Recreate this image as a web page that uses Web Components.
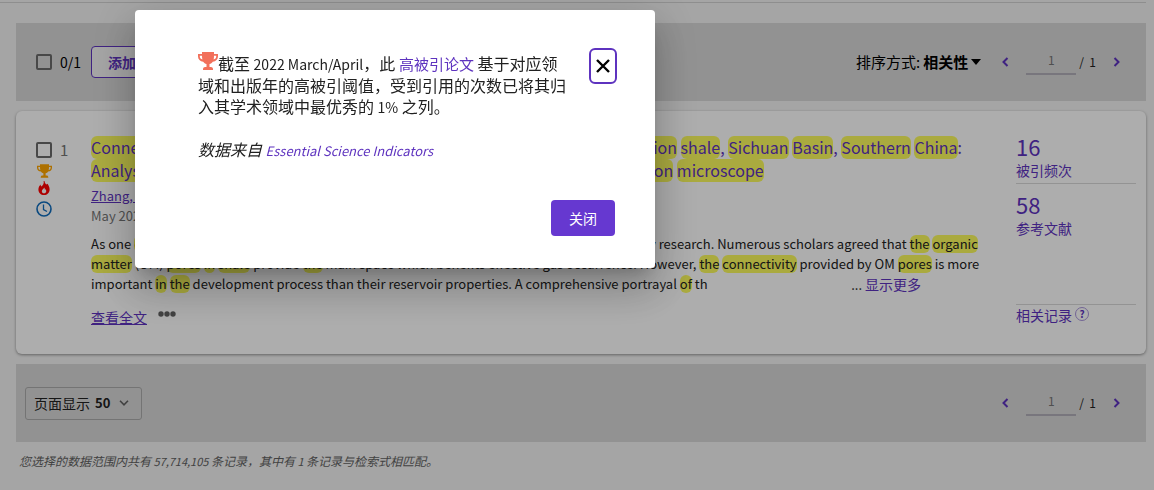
<!DOCTYPE html>
<html lang="zh-CN">
<head>
<meta charset="utf-8">
<title>检索结果</title>
<style>
  body { margin: 0; background: #f3f3f3; font-family: "Noto Sans CJK SC", sans-serif; font-size: 14px; line-height: 20px; color: #212121; }
</style>
</head>
<body>
<results-page></results-page>
<esi-dialog></esi-dialog>
<script>
const define = (name, html, setup) => {
  const t = document.createElement('template');
  t.innerHTML = html;
  customElements.define(name, class extends HTMLElement {
    constructor() {
      super();
      this.attachShadow({ mode: 'open' }).append(t.content.cloneNode(true));
    }
    connectedCallback() { if (setup) setup(this, this.shadowRoot); }
  });
};

const ICONS = {
  trophy: ['0 0 20 18', '<path fill="currentColor" fill-rule="evenodd" d="M4 0h12v2h4v2.500c0 3-2.200 4.800-5.200 5.200-.8 1.300-1.900 2-3.300 2.300V15H13c1 0 2 .8 2 2v1H5v-1c0-1.200 1-2 2-2h1.500v-3c-1.400-.3-2.500-1-3.300-2.300C2.200 9.300 0 7.500 0 4.500V2h4zM1.800 3.800v.7c0 1.500 1 2.600 2.600 3.100C4.100 6.500 4 5.200 4 3.800zm14.200 0c0 1.400-.1 2.700-.4 3.800 1.600-.5 2.600-1.600 2.600-3.100v-.7z"/>'],
  flame: ['0 0 12 15', '<path fill="currentColor" fill-rule="evenodd" d="M6.500 0c.3 2 1.200 3 2.100 3.700L9.700 3C11 4.800 12 6.700 12 9c0 3.500-2.700 6-6 6s-6-2.500-6-6c0-2.300 1.200-4 2.400-5.300 0 1 .2 1.700.8 2.100C4.800 4.600 6.300 2.600 5.600 0zM6.200 7C5.800 8.500 3.700 9 3.700 10.900c0 1.400 1 2.300 2.300 2.300s2.400-1 2.400-2.300c0-.8-.3-1.500-.7-2l-.8.6c.1-.9-.1-1.800-.7-2.500z"/>'],
  clock: ['0 0 16 16', '<circle cx="8" cy="8" r="7" fill="none" stroke="currentColor" stroke-width="1.600"/><path fill="none" stroke="currentColor" stroke-width="1.300" d="M7.500 3.500v5l3.500 2"/>'],
  prev: ['0 0 8 10', '<path fill="none" stroke="currentColor" stroke-width="2" d="M6.500 1 2.500 5l4 4"/>'],
  next: ['0 0 8 10', '<path fill="none" stroke="currentColor" stroke-width="2" d="m1.500 1 4 4-4 4"/>'],
  down: ['0 0 10 6', '<path fill="none" stroke="currentColor" stroke-width="1.600" d="m1 .8 4 4 4-4"/>'],
  caret: ['0 0 10 6', '<path fill="currentColor" d="M0 0h10L5 6z"/>'],
  dots: ['0 0 18 6', '<circle cx="3" cy="3" r="2.700" fill="currentColor"/><circle cx="9" cy="3" r="2.700" fill="currentColor"/><circle cx="15" cy="3" r="2.700" fill="currentColor"/>'],
  close: ['0 0 14 14', '<path fill="none" stroke="currentColor" stroke-width="2.400" d="m1 1 12 12M13 1 1 13"/>']
};
define('ui-icon', `<style>
  :host { display: inline-block; flex: none; line-height: 0; }
  svg { display: block; width: 100%; height: 100%; }
</style><svg aria-hidden="true"></svg>`, (el, root) => {
  const [box, shape] = ICONS[el.getAttribute('name')];
  const svg = root.querySelector('svg');
  svg.setAttribute('viewBox', box);
  svg.innerHTML = shape;
});

define('tick-box', `<style>
  :host { display: flex; align-items: center; }
  label { display: flex; align-items: center; gap: 8px; line-height: 20px; }
  input { appearance: none; box-sizing: border-box; margin: 0; width: 16px; height: 16px; border: 2px solid #6a6a6a; border-radius: 2px; }
</style><label><input type="checkbox"><slot></slot></label>`);

define('page-turner', `<style>
  :host { display: flex; align-items: center; }
  button { border: 0; padding: 0; background: none; color: #5e33bf; width: 22px; height: 28px; display: flex; align-items: center; justify-content: center; }
  ui-icon { width: 8px; height: 10px; }
  input { box-sizing: border-box; width: 50px; height: 26px; margin: 0 3px 0 10px; padding: 0 0 3px; border: 0; border-bottom: 2px solid #b1afb8; border-radius: 0; background: none; text-align: center; font: 12px/20px "Noto Sans CJK SC", sans-serif; color: #757575; }
  span { font-size: 12px; white-space: pre; margin-right: 10px; }
</style>
<button aria-label="上一页"><ui-icon name="prev"></ui-icon></button>
<input value="1" aria-label="页码"><span>/  1</span>
<button aria-label="下一页"><ui-icon name="next"></ui-icon></button>`);

define('tool-bar', `<style>
  :host { display: flex; align-items: center; box-sizing: border-box; height: 78px; background: #d8d8d8; padding-right: 18px; }
  .end { margin-left: auto; display: flex; align-items: center; gap: 13px; }
</style><slot></slot><div class="end"><slot name="sort"></slot><page-turner></page-turner></div>`);

define('add-button', `<style>
  button { height: 32px; padding: 0 16px; border: 1px solid #5e33bf; border-radius: 4px; background: #f3f3f3; color: #5e33bf; font: bold 14px/20px "Noto Sans CJK SC", sans-serif; }
</style><button><slot></slot></button>`);

define('sort-button', `<style>
  button { display: flex; align-items: center; border: 0; padding: 0; background: none; color: #000; font: 15px/20px "Noto Sans CJK SC", sans-serif; }
  b { margin: 0 3px; }
  ui-icon { width: 10px; height: 6px; }
</style><button><span>排序方式:</span><b>相关性</b><ui-icon name="caret"></ui-icon></button>`);

define('page-size', `<style>
  :host { display: flex; align-items: center; box-sizing: border-box; height: 33px; margin-left: 9px; padding: 0 12px 0 8px; border: 1px solid #ababab; border-radius: 3px; }
  select { appearance: none; border: 0; background: none; margin: 0 0 0 5px; padding: 0; width: 24px; font: bold 13px/20px "Noto Sans CJK SC", sans-serif; color: #212121; }
  ui-icon { width: 10px; height: 6px; color: #616161; }
</style><label for="size">页面显示</label><select id="size"><option>10</option><option>25</option><option selected>50</option></select><ui-icon name="down"></ui-icon>`);

define('record-metric', `<style>
  :host { display: block; color: #5e33bf; }
  a { color: inherit; text-decoration: none; display: block; }
  .n { font-size: 22px; line-height: 22px; margin-bottom: 3px; }
</style><a href="#"><div class="n"><slot name="count"></slot></div><div><slot></slot></div></a>`);

define('record-card', `<style>
  :host { display: grid; grid-template-columns: 75px minmax(0, 1fr) 120px; background: #fff; border-radius: 6px; box-shadow: 0 1px 3px rgba(0,0,0,.4); padding: 24px 10px 27px 0; }
  .side { padding: 5px 0 0 20px; color: #757575; display: flex; flex-direction: column; align-items: flex-start; font-size: 15px; }
  .flags { width: 16px; display: flex; flex-direction: column; align-items: center; }
  .t { width: 15px; height: 14px; color: #ffa600; margin: 4px 0 3px; }
  .f { width: 12px; height: 14px; color: #f00; margin-bottom: 6px; }
  .c { width: 16px; height: 16px; color: #0f6cbd; }
  .main { white-space: nowrap; padding: 1px 40px 0 0; }
  a { color: #5e33bf; }
  mark { display: inline-block; background: #fbfb5e; color: inherit; border-radius: 6px; line-height: 18px; }
  h3 { margin: 0 0 4px; font-weight: 400; font-size: 16px; line-height: 23px; }
  h3 a { text-decoration: none; }
  h3 mark { line-height: 23px; }
  .date { color: #757575; }
  .small { font-size: 13px; }
  .abstract { margin-top: 8px; font-size: 13px; }
  .last { display: flex; justify-content: space-between; padding-right: 55px; }
  .last a { text-decoration: none; font-size: 14px; }
  .links { display: flex; align-items: flex-start; margin-top: 12px; gap: 11px; }
  .links button { display: flex; border: 0; padding: 4px 0; background: none; color: #616161; }
  .links ui-icon { width: 18px; height: 6px; }
  .stats { display: flex; flex-direction: column; }
  .first { border-bottom: 1px solid #d9d9d9; padding-bottom: 3px; margin-bottom: 9px; }
  .related { margin-top: 66px; border-top: 1px solid #d9d9d9; display: flex; gap: 3px; }
  .related a { text-decoration: none; }
  .help { box-sizing: border-box; width: 14px; height: 14px; margin-top: 2px; border: 1px solid #a995dc; border-radius: 50%; padding: 0; background: none; color: #5e33bf; font: bold 10px/12px "Noto Sans CJK SC", sans-serif; }
</style>
<div class="side">
  <tick-box>1</tick-box>
  <div class="flags"><ui-icon class="t" name="trophy"></ui-icon><ui-icon class="f" name="flame"></ui-icon><ui-icon class="c" name="clock"></ui-icon></div>
</div>
<div class="main">
  <h3><a href="#"><mark>Connectivity</mark> <mark>of</mark> <mark>organic</mark> <mark>matter</mark> <mark>pores</mark> in the <mark>Lower</mark> Silurian Longmaxi <mark>Formation</mark> <mark>shale</mark>, <mark>Sichuan</mark> <mark>Basin</mark>, <mark>Southern</mark> <mark>China</mark>:<br><mark>Analyses</mark> from helium ion microscope and focused ion beam scanning <mark>electron</mark> <mark>microscope</mark></a></h3>
  <div class="small"><a href="#">Zhang, Y; Wu, J</a></div>
  <div class="date small">May 2022 | GEOLOGICAL JOURNAL</div>
  <div class="abstract">
    <div>As one <mark>of</mark> <mark>the</mark> unconventional resources, <mark>shale</mark> gas has become a hot spot <mark>in</mark> worldwide energy research. Numerous scholars agreed that <mark>the</mark> <mark>organic</mark></div>
    <div><mark>matter</mark> (OM) <mark>pores</mark> <mark>in</mark> <mark>shale</mark> provide <mark>the</mark> main space which benefits effective gas occurrence. However, <mark>the</mark> <mark>connectivity</mark> provided by OM <mark>pores</mark> is more</div>
    <div class="last"><span>important <mark>in</mark> <mark>the</mark> development process than their reservoir properties. A comprehensive portrayal <mark>of</mark> th</span><span>... <a href="#">显示更多</a></span></div>
  </div>
  <div class="links"><a href="#">查看全文</a><button aria-label="更多"><ui-icon name="dots"></ui-icon></button></div>
</div>
<div class="stats">
  <record-metric class="first"><span slot="count">16</span>被引频次</record-metric>
  <record-metric><span slot="count">58</span>参考文献</record-metric>
  <div class="related"><a href="#">相关记录</a><button class="help" aria-label="帮助">?</button></div>
</div>`);

define('results-page', `<style>
  :host { display: block; padding: 2px 8px 0 0; }
  hr { margin: 0 0 20px; border: 0; border-top: 1px solid #d2d2d2; }
  main { margin-left: 16px; display: flex; flex-direction: column; gap: 10px; }
  tick-box.all { margin: 0 10px 0 20px; color: #000; }
  p { margin: -1px 0 0 3px; font-size: 12px; line-height: 20px; font-style: italic; color: #616161; }
  .latin { font-size: 11px; }
</style>
<hr>
<main>
  <tool-bar><tick-box class="all">0/1</tick-box><add-button>添加到标记结果列表</add-button><sort-button slot="sort"></sort-button></tool-bar>
  <record-card></record-card>
  <tool-bar><page-size></page-size></tool-bar>
  <p>您选择的数据范围内共有<span class="latin"> 57,714,105 </span>条记录，其中有<span class="latin"> 1 </span>条记录与检索式相匹配。</p>
</main>`);

define('esi-dialog', `<style>
  :host { position: fixed; inset: 0; display: flex; align-items: flex-start; padding: 10px 0 0 135px; background: rgba(0,0,0,.32); }
  section { box-sizing: border-box; width: 520px; padding: 38px 38px 32px 63px; background: #fff; border-radius: 4px; box-shadow: 0 11px 15px -7px rgba(0,0,0,.2), 0 24px 38px 3px rgba(0,0,0,.14), 0 9px 46px 8px rgba(0,0,0,.12); }
  .top { display: flex; justify-content: space-between; align-items: flex-start; }
  .text { width: 370px; margin-top: 5px; font-size: 16px; line-height: 21px; }
  p { margin: 0 0 21px; }
  p:last-child { margin: 0; font-style: italic; }
  a { color: #5e33bf; text-decoration: none; font-size: 15px; }
  .latin { font-size: 14px; }
  p:last-child .latin { font-size: 13px; }
  ui-icon.cup { width: 20px; height: 18px; margin-top: -4px; color: #f2705b; }
  .close { box-sizing: border-box; width: 28px; height: 36px; padding: 0; border: 2px solid #5e33bf; border-radius: 6px; background: #fff; color: #000; display: flex; align-items: center; justify-content: center; }
  .close ui-icon { width: 14px; height: 14px; }
  footer { display: flex; justify-content: flex-end; margin-top: 39px; padding-right: 2px; }
  footer button { width: 64px; height: 36px; border: 0; border-radius: 4px; padding: 0; background: #6638d0; color: #fff; font: 14px/20px "Noto Sans CJK SC", sans-serif; }
</style>
<section role="dialog" aria-label="高被引论文">
  <div class="top">
    <div class="text">
      <p><ui-icon class="cup" name="trophy"></ui-icon>截至 <span class="latin">2022 March/April</span>，此 <a href="#">高被引论文</a> 基于对应领域和出版年的高被引阈值，受到引用的次数已将其归入其学术领域中最优秀的 <span class="latin">1%</span> 之列。</p>
      <p>数据来自 <a class="latin" href="#">Essential Science Indicators</a></p>
    </div>
    <button class="close" aria-label="关闭对话框"><ui-icon name="close"></ui-icon></button>
  </div>
  <footer><button>关闭</button></footer>
</section>`);
</script>
</body>
</html>
